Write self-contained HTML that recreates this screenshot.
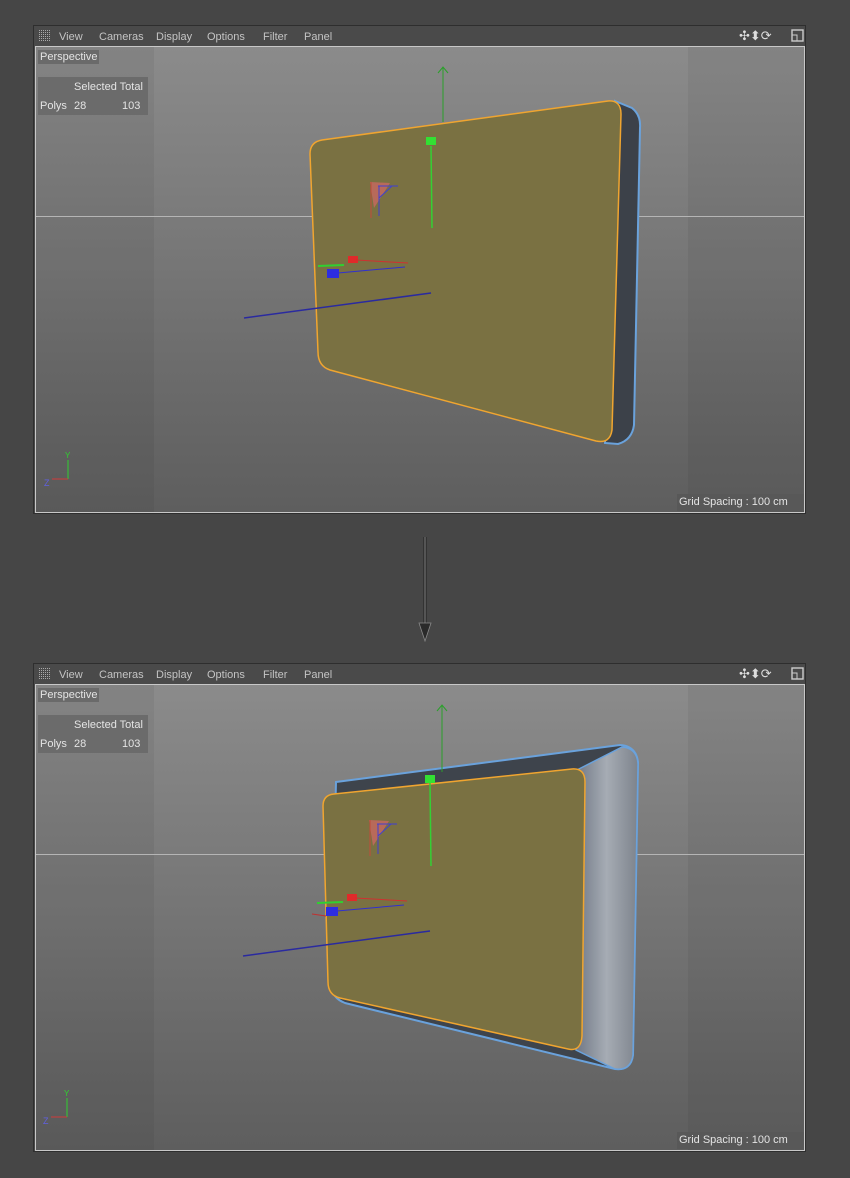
<!DOCTYPE html>
<html><head><style>
body{margin:0;width:850px;height:1178px;background:#464646;position:relative;overflow:hidden;font-family:"Liberation Sans",sans-serif;}
.panel{position:absolute;left:33px;width:773px;height:489px;background:#4a4a4a;border:1px solid #2e2e2e;box-sizing:border-box}
.menu{position:absolute;left:0;top:0;width:100%;height:20px;color:#c4c4c4;font-size:11px;line-height:20px}
.menu span{position:absolute;top:1px}
.vp{position:absolute;left:1px;top:20px;width:770px;height:467px;border:1px solid #c8c8c8;box-sizing:border-box;background:linear-gradient(#8b8b8b,#5e5e5e);overflow:hidden}
.side{position:absolute;top:0;height:100%;background:rgba(0,0,0,0.05)}
.hz{position:absolute;left:0;width:100%;height:1px;top:169px;background:#b5b5b5}
.lbl{position:absolute;background:#6a6a6a;color:#e4e4e4;font-size:11px}
</style></head><body>

<div class="panel" style="top:25px">
 <div class="menu">
  <svg style="position:absolute;left:5px;top:4px" width="12" height="11"><pattern id="p" width="2" height="2" patternUnits="userSpaceOnUse"><rect width="1" height="1" fill="#aaa"/></pattern><rect width="12" height="11" fill="url(#p)"/></svg>
  <span style="left:25px">View</span><span style="left:65px">Cameras</span><span style="left:122px">Display</span><span style="left:173px">Options</span><span style="left:229px">Filter</span><span style="left:270px">Panel</span>
  <span style="left:705px;top:0;font-size:13px;color:#ddd">✣⬍⟳</span>
  <svg style="position:absolute;left:757px;top:3px" width="13" height="13"><rect x="1" y="1" width="11" height="11" fill="none" stroke="#ccc" stroke-width="1.4"/><rect x="1" y="6" width="5" height="6" fill="none" stroke="#ccc"/></svg>
 </div>
 <div class="vp">
  <div class="side" style="left:0;width:118px"></div><div class="side" style="left:652px;width:118px"></div>
  <div class="hz"></div>
  <div class="lbl" style="left:2px;top:3px;padding:1px 2px">Perspective</div>
  <div class="lbl" style="left:2px;top:30px;width:110px;height:38px;background:#6b6b6b"><span style="position:absolute;left:36px;top:4px">Selected Total</span><span style="position:absolute;left:2px;top:23px">Polys</span><span style="position:absolute;left:36px;top:23px">28</span><span style="position:absolute;left:84px;top:23px">103</span></div>
  <div class="lbl" style="left:641px;top:447px;width:126px;height:17px;background:#585858;line-height:17px;padding-left:2px">Grid Spacing : 100 cm</div>
 </div>
</div>

<div class="panel" style="top:663px">
 <div class="menu">
  <svg style="position:absolute;left:5px;top:4px" width="12" height="11"><rect width="12" height="11" fill="url(#p)"/></svg>
  <span style="left:25px">View</span><span style="left:65px">Cameras</span><span style="left:122px">Display</span><span style="left:173px">Options</span><span style="left:229px">Filter</span><span style="left:270px">Panel</span>
  <span style="left:705px;top:0;font-size:13px;color:#ddd">✣⬍⟳</span>
  <svg style="position:absolute;left:757px;top:3px" width="13" height="13"><rect x="1" y="1" width="11" height="11" fill="none" stroke="#ccc" stroke-width="1.4"/><rect x="1" y="6" width="5" height="6" fill="none" stroke="#ccc"/></svg>
 </div>
 <div class="vp">
  <div class="side" style="left:0;width:118px"></div><div class="side" style="left:652px;width:118px"></div>
  <div class="hz"></div>
  <div class="lbl" style="left:2px;top:3px;padding:1px 2px">Perspective</div>
  <div class="lbl" style="left:2px;top:30px;width:110px;height:38px;background:#6b6b6b"><span style="position:absolute;left:36px;top:4px">Selected Total</span><span style="position:absolute;left:2px;top:23px">Polys</span><span style="position:absolute;left:36px;top:23px">28</span><span style="position:absolute;left:84px;top:23px">103</span></div>
  <div class="lbl" style="left:641px;top:447px;width:126px;height:17px;background:#585858;line-height:17px;padding-left:2px">Grid Spacing : 100 cm</div>
 </div>
</div>

<svg style="position:absolute;left:0;top:0" width="850" height="1178">
 <defs><linearGradient id="sg" x1="0" x2="1"><stop offset="0" stop-color="#6e7684"/><stop offset="0.5" stop-color="#a6acb4"/><stop offset="1" stop-color="#7d838c"/></linearGradient></defs>
 <path d="M615,101 L632,108 Q641,115 640,128 L634,425 Q632,440 618,444 L605,443 Z" fill="#3c4149" stroke="#6aa2dc" stroke-width="2"/>
 <path d="M322,140 L608,101 Q621,100 621,114 L612,430 Q610,444 596,441 L330,370 Q318,366 318,352 L310,154 Q310,142 322,140 Z" fill="#7a7142" stroke="#f0a530" stroke-width="1.5"/>
 <g>
 <line x1="443" y1="68" x2="443" y2="122" stroke="#2aa02a"/><path d="M438,73 L443,67 L448,73" fill="none" stroke="#2aa02a"/>
 <line x1="431" y1="146" x2="432" y2="228" stroke="#34d034" stroke-width="1.5"/><rect x="426" y="137" width="10" height="8" fill="#33e033"/>
 <path d="M370,182 L390,183 L374,208 Z" fill="#b86a5a"/><line x1="371" y1="182" x2="371" y2="218" stroke="#c24a3a"/><path d="M378,186 L398,186 M379,186 L379,216 M379,198 L392,186" stroke="#4040d0" fill="none"/>
 <rect x="348" y="256" width="10" height="7" fill="#e02a2a"/><line x1="356" y1="260" x2="408" y2="263" stroke="#d03030"/>
 <line x1="318" y1="266" x2="344" y2="265" stroke="#30d030" stroke-width="2"/>
 <rect x="327" y="269" width="12" height="9" fill="#2d2de0"/><line x1="338" y1="273" x2="405" y2="267" stroke="#3030d0"/>
 <line x1="244" y1="318" x2="431" y2="293" stroke="#2a2aa0" stroke-width="1.5"/>
 </g>
 <line x1="68" y1="460" x2="68" y2="479" stroke="#30d030"/><text x="65" y="458" font-size="8" fill="#30d030" font-family="Liberation Sans">Y</text>
 <line x1="52" y1="479" x2="68" y2="479" stroke="#d03a3a"/><text x="44" y="486" font-size="9" fill="#6060e0" font-family="Liberation Sans">Z</text>

 <path d="M336,782 L620,745 Q636,746 638,762 L633,1055 Q631,1071 615,1069 L345,1003 Q332,998 331,985 Z" fill="#3e444c" stroke="#6aa2dc" stroke-width="2"/>
 <path d="M575,771 L622,747 Q637,748 638,764 L633,1055 Q631,1071 615,1069 L576,1050 Z" fill="url(#sg)" stroke="#6aa2dc" stroke-width="1.5"/>
 <path d="M334,794 L572,769 Q585,768 585,782 L582,1036 Q581,1052 568,1049 L340,998 Q328,995 328,982 L323,806 Q323,795 334,794 Z" fill="#7a7142" stroke="#f0a530" stroke-width="1.5"/>
 <g>
 <line x1="442" y1="706" x2="442" y2="772" stroke="#2aa02a"/><path d="M437,711 L442,705 L447,711" fill="none" stroke="#2aa02a"/>
 <line x1="430" y1="783" x2="431" y2="866" stroke="#34d034" stroke-width="1.5"/><rect x="425" y="775" width="10" height="8" fill="#33e033"/>
 <path d="M369,820 L389,821 L373,846 Z" fill="#b86a5a"/><line x1="370" y1="820" x2="370" y2="856" stroke="#c24a3a"/><path d="M377,824 L397,824 M378,824 L378,854 M378,836 L391,824" stroke="#4040d0" fill="none"/>
 <rect x="347" y="894" width="10" height="7" fill="#e02a2a"/><line x1="355" y1="898" x2="407" y2="901" stroke="#d03030"/>
 <line x1="317" y1="903" x2="343" y2="902" stroke="#30d030" stroke-width="2"/><line x1="312" y1="914" x2="326" y2="916" stroke="#c03030"/>
 <rect x="326" y="907" width="12" height="9" fill="#2d2de0"/><line x1="337" y1="911" x2="404" y2="905" stroke="#3030d0"/>
 <line x1="243" y1="956" x2="430" y2="931" stroke="#2a2aa0" stroke-width="1.5"/>
 </g>
 <line x1="67" y1="1098" x2="67" y2="1117" stroke="#30d030"/><text x="64" y="1096" font-size="8" fill="#30d030" font-family="Liberation Sans">Y</text>
 <line x1="51" y1="1117" x2="67" y2="1117" stroke="#d03a3a"/><text x="43" y="1124" font-size="9" fill="#6060e0" font-family="Liberation Sans">Z</text>

 <line x1="425" y1="537" x2="425" y2="628" stroke="#202020" stroke-width="3"/>
 <line x1="425" y1="537" x2="425" y2="628" stroke="#8a8a8a" stroke-width="1"/>
 <path d="M419,623 L425,641 L431,623 Z" fill="#2a2a2a" stroke="#8a8a8a" stroke-width="0.8"/>
</svg>
</body></html>
